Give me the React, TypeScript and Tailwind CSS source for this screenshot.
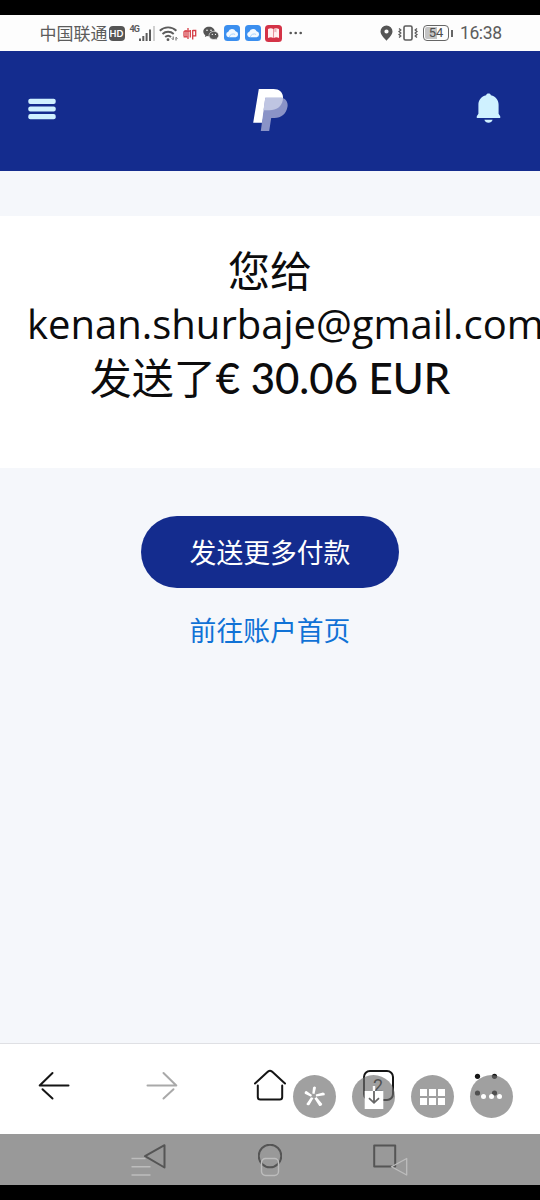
import React from "react";

const CloudBadge = () => (
    <svg className="w-4 h-4 shrink-0" viewBox="0 0 16 16">
        <rect width="16" height="16" rx="3.5" fill="#3b8fef" />
        <path d="M4.8 12.2a2.8 2.8 0 0 1-.5-5.5 3.9 3.9 0 0 1 7.3-.4 3 3 0 0 1 .1 5.9z" fill="#f3f9ff" />
        <path d="M5.3 12a4 4 0 0 1 5.8-2.6" fill="none" stroke="#a9d2fb" strokeWidth="1" />
    </svg>
);

const StatusBar = () => (
    <div className="h-9 bg-[#fdfdfd] flex items-center pl-[39.5px] text-[#5c5c5c]">
        <span className="w-[69px] text-[17px] leading-none whitespace-nowrap">中国联通</span>
        <span className="w-4 h-[15px] rounded-[4px] bg-[#555] text-white text-[9px] font-bold leading-[15px] text-center">HD</span>
        <span className="ml-[5px] w-[9px] mb-[7px] text-[9px] font-bold leading-none tracking-[-0.8px] font-['Roboto']">4G</span>
        <svg className="w-[17px] h-4 mt-px shrink-0" viewBox="0 0 17 16" fill="#5c5c5c">
            <rect x="0" y="12.5" width="2" height="2.5" />
            <rect x="3.3" y="10" width="2" height="5" />
            <rect x="6.6" y="7" width="2" height="8" />
            <rect x="10" y="3.5" width="2" height="11.5" />
            <rect x="14" y="0" width="2" height="15" fill="#d0d0d0" />
        </svg>
        <svg className="ml-[3px] w-[19px] h-[17px] shrink-0" viewBox="0 0 19 17" fill="none" stroke="#5c5c5c" strokeWidth="1.9">
            <path d="M.8 5.7a12 12 0 0 1 16.6 0M3.5 9a8.2 8.2 0 0 1 11.2 0M6.2 12a4.3 4.3 0 0 1 5.8 0" />
            <circle cx="9" cy="14.7" r="1.4" fill="#5c5c5c" stroke="none" />
            <path d="M14.2 11.5v3M12.8 13.4l1.4 1.4M17 15.5v-3M18.4 13.6L17 12.2" strokeWidth="1" />
        </svg>
        <svg className="ml-[5px] w-[14px] h-[13px] shrink-0" viewBox="0 0 14 13" fill="none" stroke="#d63d45" strokeWidth="1.3">
            <path d="M1 4.2v5M3 3v7.3M.6 9.800h3.6M5 1v11M7.3 3v7.5M1 4.200h6.5M9.7 3v9.5M9.7 3.500h3v5.300h-3" />
        </svg>
        <svg className="ml-[6px] w-4 h-[15px] shrink-0" viewBox="0 0 16 15">
            <path d="M6 .8C2.8.8.3 2.9.3 5.6c0 1.5.7 2.8 2 3.6l-.4 1.7L4 9.9c.6.2 1.3.3 2 .3 3.2 0 5.7-2.1 5.7-4.700S9.200.8 6 .8z" fill="#555" />
            <path d="M10.9 5.300c-2.7 0-4.9 1.8-4.9 4.1s2.2 4.1 4.9 4.1c.6 0 1.2-.1 1.7-.3l1.6.9-.3-1.5c1-.8 1.8-1.900 1.8-3.200 0-2.300-2.100-4.100-4.800-4.100z" fill="#555" stroke="#fdfdfd" strokeWidth=".6" />
            <g fill="#fdfdfd">
                <circle cx="4" cy="4.3" r=".8" />
                <circle cx="8" cy="4.3" r=".8" />
                <circle cx="9.3" cy="8.4" r=".6" />
                <circle cx="12.5" cy="8.4" r=".6" />
            </g>
        </svg>
        <div className="ml-[5px] flex gap-[5px]">
            <CloudBadge />
            <CloudBadge />
        </div>
        <svg className="ml-1 w-[17px] h-[17px] shrink-0" viewBox="0 0 17 17">
            <rect width="17" height="17" rx="3.5" fill="#d43347" />
            <path d="M3 4q3-1.500 5.300 0v9q-2.300-1.300-5.300 0zM8.800 4q2.300-1.500 5.200 0v9q-2.900-1.300-5.200 0z" fill="#fff0f0" />
            <path d="M11.500 3.500v4l-1.100-.8-1.100.8v-4" fill="#edb5bb" />
        </svg>
        <svg className="ml-[7px] w-[14px] h-1 shrink-0" viewBox="0 0 14 4" fill="#555">
            <circle cx="1.7" cy="2" r="1.3" />
            <circle cx="6.7" cy="2" r="1.3" />
            <circle cx="11.7" cy="2" r="1.3" />
        </svg>
        <svg className="ml-auto w-[13px] h-4 shrink-0" viewBox="0 0 13 16">
            <path fillRule="evenodd" d="M6.5.5A6 6 0 0 0 .5 6.500C.5 10 4.500 13.500 6.500 15.700 8.500 13.500 12.500 10 12.500 6.500A6 6 0 0 0 6.500.5zm0 3.900a2.100 2.100 0 1 1 0 4.200 2.100 2.100 0 0 1 0-4.200z" fill="#555" />
        </svg>
        <svg className="ml-[5px] w-5 h-4 shrink-0" viewBox="0 0 20 16" fill="none" stroke="#5c5c5c">
            <rect x="6" y="1" width="8" height="14" rx="1.5" strokeWidth="1.6" />
            <path d="M1 3.500l1.800 1.500L1 6.500 2.800 8 1 9.500 2.800 11 1 12.500M19 3.500L17.200 5 19 6.500 17.200 8 19 9.500 17.200 11l1.800 1.500" strokeWidth="1.3" />
        </svg>
        <div className="ml-[5px] w-[26px] h-4 rounded-[4px] border-[1.5px] border-[#666] p-px">
            <div className="h-full rounded-[2px] bg-linear-to-r from-[#c4c4c4] from-55% to-transparent to-55% text-[13px] leading-[12px] text-center text-[#4f4f4f] font-['Roboto']">54</div>
        </div>
        <span className="ml-[2px] w-[2px] h-[7px] bg-[#666]" />
        <span className="ml-[7px] mr-[38px] mt-[2px] w-[42px] text-[17.5px] leading-none tracking-[-0.4px] whitespace-nowrap font-['Roboto']">16:38</span>
    </div>
);

const Header = () => (
    <header className="h-[120px] bg-[#142c8e] flex items-center justify-between pl-7 pr-[39px]">
        <svg className="w-7 h-[22px] -mt-[5px]" viewBox="0 0 28 22" fill="#cff1ff">
            <rect x=".3" y=".8" width="27.4" height="5.2" rx="2" />
            <rect x=".3" y="8.4" width="27.4" height="5.2" rx="2" />
            <rect x=".3" y="16" width="27.4" height="5.2" rx="2" />
        </svg>
        <svg className="w-[35px] h-[43px] -mt-[2px] ml-[9px]" viewBox="0 0 35 43">
            <path d="M5.800 0H20.500C27 0 31 4.200 29.800 10.500 28.500 17.500 23.500 21 16.500 21H11.300L9.300 33.700H.2z" fill="#fff" />
            <path d="M12.300 8.800h16.500c4.300 1.200 6.400 4.700 5.700 9-1.200 7-6.200 11.300-13 11.300h-3.300L16.200 42H7.800z" fill="#8a93c7" />
            <path d="M12.300 8.800h17.600q.2 1-.1 2.500c-1.300 6.500-6.300 9.900-13.300 9.900h-6.100z" fill="#bfc5e2" />
        </svg>
        <svg className="w-[25px] h-[30px] -mt-[6px]" viewBox="0 0 26 31" fill="#cff1ff">
            <path d="M13 .3c1.400 0 2.200.7 2.500 2C20.500 3.500 23.500 7.300 23.500 12v9.500l1.700 2.700v1.600H.8v-1.600l1.700-2.700V12C2.500 7.300 5.500 3.500 10.500 2.300c.3-1.300 1.100-2 2.500-2z" />
            <path d="M8.700 27.600h8.600c-.6 2-2.200 3.200-4.300 3.200s-3.700-1.200-4.300-3.200z" />
        </svg>
    </header>
);

const PaymentSummary = () => (
    <section className="mt-[45px] h-[252px] bg-white pt-[28px] px-7 text-[42px] leading-[54px] text-[#0c0c0d] overflow-hidden">
        <div className="text-center">您给</div>
        <div className="-ml-px -mt-px whitespace-nowrap text-[40px] font-['Open_Sans']">kenan.shurbaje@gmail.com</div>
        <div className="flex justify-center whitespace-nowrap">
            <span>发送了</span>
            <span className="font-medium">€ 30.06 EUR</span>
        </div>
    </section>
);

const BrowserToolbar = () => (
    <nav className="h-[91px] border-t border-[#dfe0e4] bg-white grid grid-cols-5 justify-items-center pt-[23px]">
        <svg className="w-9 h-9" viewBox="0 0 36 36" fill="none" stroke="#151515" strokeWidth="2" strokeLinecap="round">
            <path d="M32.500 18.500H3.700L16.500 6M6.500 22.200L16.500 31.500" strokeLinejoin="round" />
        </svg>
        <svg className="w-9 h-9" viewBox="0 0 36 36" fill="none" stroke="#a9a9a9" strokeWidth="2" strokeLinecap="round">
            <path d="M3.500 18.500H32.300L19.500 6M29.500 22.200L19.500 31.500" strokeLinejoin="round" />
        </svg>
        <svg className="w-9 h-9" viewBox="0 0 36 36" fill="none" stroke="#151515" strokeWidth="2" strokeLinecap="round" strokeLinejoin="round">
            <path d="M3 16.500L16 4.600q2-1.600 4 0L33 16.500M5.800 18.500V30q0 2.500 2.500 2.500H27.700q2.500 0 2.500-2.500V18.500" />
        </svg>
        <div className="mt-[3px] w-[31px] h-[31px] rounded-[7px] border-2 border-[#151515] text-[18px] leading-[27px] text-center text-[#151515] font-['Roboto']">2</div>
        <svg className="w-9 h-9" viewBox="0 0 36 36" fill="#151515">
            <circle cx="9.5" cy="9.3" r="2.6" />
            <circle cx="26.5" cy="9.3" r="2.6" />
            <circle cx="9.5" cy="26" r="2.6" />
            <circle cx="26.5" cy="26" r="2.6" />
        </svg>
    </nav>
);

// Translucent round buttons floating over the browser toolbar
const FloatingActions = () => (
    <div className="absolute left-[293px] top-[1075px] flex gap-4">
        <div className="w-[43px] h-[43px] rounded-full bg-[#6f6f6f]/66">
            <svg viewBox="0 0 43 43" fill="#fff">
                <path d="M19.300 18.500L20 12.500q1.500-2 3 0L21.500 19zM22.800 19.500L30 17.600q2.600.8 1.500 2.600L23 21.400zM21.400 23.400L23.500 22 29.300 29q-.6 2.500-3 1.900zM18 22.300l2.500.6L16.400 30q-2.300 1-3-1zM18 21.700L11.800 18.800q-.6-2.500 1.700-2.700L19 20z" />
            </svg>
        </div>
        <div className="w-[43px] h-[43px] rounded-full bg-[#6f6f6f]/66">
            <svg viewBox="0 0 43 43">
                <path d="M12.700 16H31.300V34H12.700z" fill="#fff" />
                <path d="M22 11v5" stroke="#fff" strokeWidth="2.4" />
                <path d="M22 16v11M17 23.200l5 4.600 5-4.600" fill="none" stroke="#666" strokeWidth="1.8" />
            </svg>
        </div>
        <div className="w-[43px] h-[43px] rounded-full bg-[#6f6f6f]/66 flex items-center justify-center">
            <div className="grid grid-cols-3 gap-[2px]">
                {[0, 1, 2, 3, 4, 5].map((cell) => (
                    <div key={cell} className="w-[7px] h-[7px] bg-white" />
                ))}
            </div>
        </div>
        <div className="w-[43px] h-[43px] rounded-full bg-[#6f6f6f]/66 flex items-center justify-center gap-[3px]">
            <span className="w-[5px] h-[5px] rounded-full bg-white" />
            <span className="w-[5px] h-[5px] rounded-full bg-white" />
            <span className="w-[5px] h-[5px] rounded-full bg-white" />
        </div>
    </div>
);

const SystemNav = () => (
    <div className="relative h-[51px] bg-[#999] flex justify-center gap-[91px] pt-[10px]">
        <svg className="w-6 h-[26px]" viewBox="0 0 24 26" fill="none" stroke="#555" strokeWidth="2" strokeLinejoin="round">
            <path d="M21.500 1.200V23.500L2 12.200z" />
        </svg>
        <svg className="w-6 h-[26px]" viewBox="0 0 24 26" fill="none" stroke="#555" strokeWidth="2">
            <circle cx="12" cy="12" r="11.3" />
        </svg>
        <svg className="w-6 h-[26px]" viewBox="0 0 24 26" fill="none" stroke="#555" strokeWidth="2" strokeLinejoin="round">
            <rect x="1.2" y="1.5" width="21" height="21" />
        </svg>
        <svg className="absolute left-[130px] top-[22px] w-[22px] h-[22px]" viewBox="0 0 22 22" stroke="#bdbdbd" strokeWidth="1.4">
            <path d="M1.500 2.500H15.500M1.500 10.700H20.500M1.500 19H20.500" />
        </svg>
        <svg className="absolute left-[260px] top-[23px] w-5 h-5" viewBox="0 0 20 20" fill="none" stroke="#bdbdbd" strokeWidth="1.4">
            <rect x="1.5" y="1.5" width="17" height="17" rx="4" />
        </svg>
        <svg className="absolute left-[389px] top-[23px] w-5 h-5" viewBox="0 0 20 20" fill="none" stroke="#bdbdbd" strokeWidth="1.3" strokeLinejoin="round">
            <path d="M17.700 1.500V18L2.500 9.700z" />
        </svg>
    </div>
);

const App: React.FC = () => {
    return (
        <div className="relative w-[540px] h-[1200px] overflow-hidden bg-black py-[15px] flex flex-col font-['Lato','Noto_Sans_CJK_SC',sans-serif]">
            <StatusBar />
            <Header />
            <main className="flex-1 bg-[#f5f7fb]">
                <PaymentSummary />
                <div className="mt-12 flex flex-col items-center text-[26.8px]">
                    <button className="w-[258px] h-[72px] rounded-full bg-[#142c8e] text-white pt-[2px]">发送更多付款</button>
                    <a className="mt-[23px] leading-10 text-[#1072d6]">前往账户首页</a>
                </div>
            </main>
            <BrowserToolbar />
            <SystemNav />
            <FloatingActions />
        </div>
    );
};

export default App;
